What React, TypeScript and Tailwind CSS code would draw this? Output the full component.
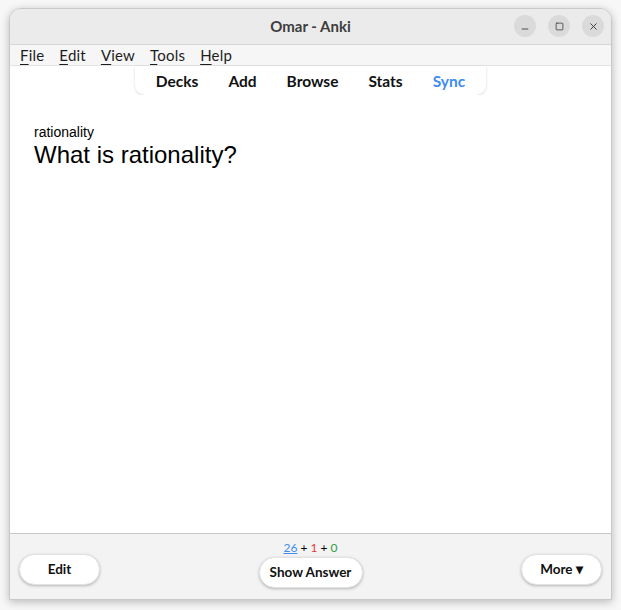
import { Minus, Square, X } from 'lucide-react';

const ui = { fontFamily: 'Lato, "Noto Sans", sans-serif' };
const card = { fontFamily: '"Liberation Sans", Arial, sans-serif' };

function MenuItem({ first, rest }: { first: string; rest: string }) {
  return (
    <span className="text-[15px] text-[#1d1d1d] tracking-[0.2px]">
      <span className="underline underline-offset-[3px] decoration-1">{first}</span>
      {rest}
    </span>
  );
}

function PillButton({ children, className = '' }: { children: React.ReactNode; className?: string }) {
  return (
    <button
      className={`h-[31px] rounded-full bg-white text-[13.5px] font-bold text-[#111] shadow-[0_1px_3px_rgba(0,0,0,0.25)] border border-[#e2e2e2] ${className}`}
    >
      {children}
    </button>
  );
}

export default function App() {
  return (
    <div className="w-[621px] h-[610px] bg-[#f7f7f7] pt-2 px-[9px] pb-[10px]" style={ui}>
      <div className="h-full flex flex-col rounded-t-xl overflow-hidden bg-white border border-[#c9c9c9] shadow-[0_2px_8px_rgba(0,0,0,0.25)]">
        {/* title bar */}
        <div className="h-9 shrink-0 bg-[#ebebeb] border-b border-[#d6d6d6] flex items-center relative">
          <div className="flex-1 text-center text-[15px] font-bold text-[#3d3d3d]">Omar - Anki</div>
          <div className="absolute right-[7px] top-[6px] flex gap-[12px]">
            <div className="w-[22px] h-[22px] rounded-full bg-[#dadada] flex items-center justify-center">
              <Minus className="w-[10px] h-[10px] translate-y-[3px] text-[#333]" strokeWidth={2} />
            </div>
            <div className="w-[22px] h-[22px] rounded-full bg-[#dadada] flex items-center justify-center">
              <Square className="w-[9px] h-[9px] text-[#333]" strokeWidth={2} />
            </div>
            <div className="w-[22px] h-[22px] rounded-full bg-[#dadada] flex items-center justify-center">
              <X className="w-[11px] h-[11px] text-[#333]" strokeWidth={2} />
            </div>
          </div>
        </div>

        {/* menu bar */}
        <div className="h-[21px] shrink-0 bg-[#f6f6f6] border-b border-[#e4e4e4] flex items-center gap-[15px] px-[10px] leading-none">
          <MenuItem first="F" rest="ile" />
          <MenuItem first="E" rest="dit" />
          <MenuItem first="V" rest="iew" />
          <MenuItem first="T" rest="ools" />
          <MenuItem first="H" rest="elp" />
        </div>

        {/* toolbar */}
        <div className="flex justify-center">
          <div className="w-[351px] h-[29px] rounded-b-[10px] bg-white shadow-[0_1px_3px_rgba(0,0,0,0.15)] flex items-center justify-center gap-[30px] text-[15.5px] font-bold text-[#111] pt-[3px]">
            <span>Decks</span>
            <span>Add</span>
            <span>Browse</span>
            <span>Stats</span>
            <span className="text-[#3e8cf0]">Sync</span>
          </div>
        </div>

        {/* card */}
        <div className="flex-1 bg-white px-6 pt-[29px]" style={card}>
          <div className="text-[14px] leading-[16px] text-black">rationality</div>
          <div className="text-[24px] leading-[30px] text-black">What is rationality?</div>
        </div>

        {/* bottom bar */}
        <div className="h-[66px] shrink-0 bg-[#f3f3f3] border-t border-[#c8c8c8] flex items-start justify-between px-[9px]">
          <PillButton className="w-[81px] mt-[20px]">Edit</PillButton>
          <div className="flex flex-col items-center">
            <div className="text-[12px] leading-[14px] mt-[7px] text-black">
              <span className="text-[#3e8cf0] underline">26</span> + <span className="text-[#e53935]">1</span> +{' '}
              <span className="text-[#2e9e45]">0</span>
            </div>
            <PillButton className="w-[104px] mt-[2px]">Show Answer</PillButton>
          </div>
          <PillButton className="w-[81px] mt-[20px]">More ▾</PillButton>
        </div>
      </div>
    </div>
  );
}
